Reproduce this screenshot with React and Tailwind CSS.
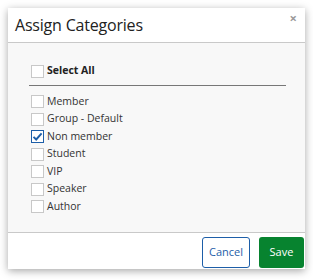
import React, { useState } from 'react';

const categories = ['Member', 'Group - Default', 'Non member', 'Student', 'VIP', 'Speaker', 'Author'];

const Box = ({ checked }) => (
    <span
        className={`w-[13px] h-[13px] shrink-0 flex items-center justify-center bg-white border ${
            checked ? 'border-[#1d5ea8]' : 'border-[#c8c8c8]'
        }`}
    >
        {checked && (
            <svg width="11" height="11" viewBox="0 0 11 11">
                <path d="M1.5 5.8 L4.2 8.5 L9.6 2.4" fill="none" stroke="#1d5ea8" strokeWidth="1.9" />
            </svg>
        )}
    </span>
);

const App = () => {
    const [checked, setChecked] = useState({ 'Non member': true });

    return (
        <div className="w-[313px] h-[280px] bg-white pt-2 pl-2 font-['Open_Sans',sans-serif]">
            <div className="w-[297px] bg-white shadow-[0_2px_8px_rgba(0,0,0,0.35)] flex flex-col">
                {/* header */}
                <div className="relative h-[35px] flex items-center px-[7px] border-b border-[#c9c9c9]">
                    <span className="text-[16px] tracking-[-0.2px] text-[#222] leading-none">Assign Categories</span>
                    <span className="absolute right-[8px] top-[4px] text-[13px] font-bold text-[#9a9a9a] leading-none">×</span>
                </div>

                {/* body */}
                <div className="h-[189px] bg-[#f8f8f8] pt-[19px] pl-[21px] pr-[19px]">
                    <div className="h-[18px] flex items-center gap-[3px] pl-[2px]">
                        <Box checked={false} />
                        <span className="text-[10.5px] font-bold text-[#222]">Select All</span>
                    </div>
                    <div className="mt-[5px] mb-[7px] border-t border-[#777]" />
                    <div className="flex flex-col">
                        {categories.map(c => (
                            <label
                                key={c}
                                className="h-[17.5px] flex items-center gap-[3px] pl-[2px] cursor-pointer"
                                onClick={() => setChecked(p => ({ ...p, [c]: !p[c] }))}
                            >
                                <Box checked={!!checked[c]} />
                                <span className="text-[10.5px] text-[#333]">{c}</span>
                            </label>
                        ))}
                    </div>
                </div>

                {/* footer */}
                <div className="border-t border-[#c9c9c9] h-[37px] flex items-end justify-end gap-[9px] pr-px pb-px">
                    <button className="w-[48px] h-[31px] rounded-[3px] border border-[#1d5ea8] bg-white text-[11px] text-[#1d5ea8]">
                        Cancel
                    </button>
                    <button className="w-[45px] h-[31px] rounded-[3px] bg-[#07832f] text-[11px] text-white">
                        Save
                    </button>
                </div>
            </div>
        </div>
    );
};

export default App;
